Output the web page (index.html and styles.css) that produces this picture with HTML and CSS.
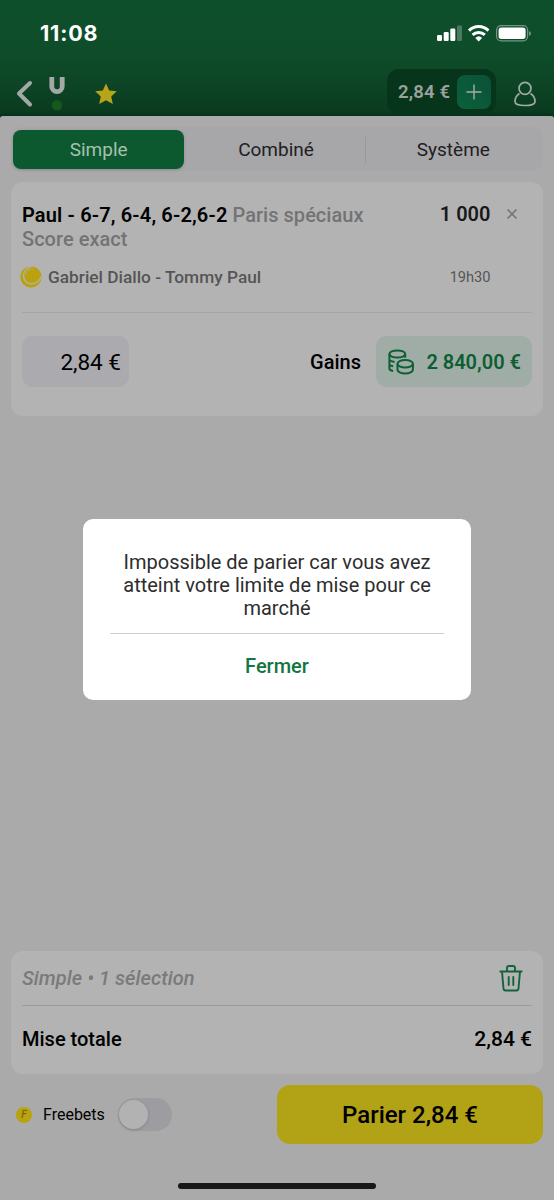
FILE: index.html
```html
<!DOCTYPE html>
<html lang="fr">
<head>
<meta charset="utf-8">
<meta name="viewport" content="width=device-width">
<title>Panier</title>
<link rel="stylesheet" href="styles.css">
</head>
<body>
<div class="app">
  <header class="header">
    <div class="status">
      <span class="clock">11:08</span>
      <svg class="status-icons" width="98" height="20" viewBox="0 0 98 20">
        <g fill="#fff">
          <rect x="1" y="11" width="5" height="6" rx="1.2"/>
          <rect x="7.700" y="8" width="5" height="9" rx="1.2"/>
          <rect x="14.300" y="4.500" width="5" height="12.500" rx="1.2"/>
          <rect x="21" y="1.500" width="5" height="15.500" rx="1.2" opacity=".25"/>
        </g>
        <g fill="none" stroke="#fff" stroke-width="3">
          <path d="M33 6.600a13.600 13.600 0 0 1 19.400 0"/>
          <path d="M36.600 10.900a8.700 8.700 0 0 1 12.200 0"/>
        </g>
        <path d="M39.300 13.900a5 5 0 0 1 6.800 0l-3.400 3.500z" fill="#fff"/>
        <rect x="60.600" y="1.600" width="31" height="15.200" rx="4.500" fill="none" stroke="#76957f" stroke-width="1.200"/>
        <rect x="62.600" y="3.600" width="27" height="11.400" rx="2.700" fill="#fff"/>
        <path d="M93 7v5q2-.7 2-2.500T93 7" fill="#76957f"/>
      </svg>
    </div>
    <nav class="nav">
      <svg class="back" width="20" height="30" viewBox="0 0 20 30"><path d="M16 4 5 14.500 16 25.500" fill="none" stroke="#a5a9a6" stroke-width="4" stroke-linecap="round" stroke-linejoin="round"/></svg>
      <svg class="brand" width="20" height="36" viewBox="0 0 20 36"><path d="M4.800 2v9.500a5.200 5.200 0 0 0 10.400 0V2" fill="none" stroke="#a5a9a6" stroke-width="4.800"/><circle cx="10" cy="30.300" r="5.200" fill="#17581d"/></svg>
      <svg class="star" width="24" height="24" viewBox="0 0 24 24"><path d="m12 1.500 3.200 7 7.600.8-5.600 5.300 1.600 7.400L12 18.300 5.200 22l1.600-7.400L1.200 9.300l7.600-.8z" fill="#b8a417"/></svg>
      <div class="balance"><span class="amount">2,84 €</span><span class="add"><svg width="16" height="16" viewBox="0 0 16 16"><path d="M8 .5v15M.5 8h15" stroke="#a5ada7" stroke-width="1.400"/></svg></span></div>
      <svg class="user" width="24" height="28" viewBox="0 0 24 28"><g fill="none" stroke="#a0aaa4" stroke-width="1.700"><circle cx="12" cy="8.300" r="6"/><path d="M6.500 13.500C3.200 15.500 2 18.500 2 21.500c0 3 4.600 4 10 4s10-1 10-4c0-3-1.200-6-4.500-8"/></g></svg>
    </nav>
  </header>

  <main class="sheet">
    <div class="tabs">
      <span class="tab tab-active">Simple</span>
      <span class="tab">Combiné</span>
      <span class="tab tab-last">Système</span>
    </div>

    <section class="card bet">
      <div class="bet-top">
        <p class="pick"><b>Paul - 6-7, 6-4, 6-2,6-2</b> Paris spéciaux<br>Score exact</p>
        <span class="odds">1 000</span>
        <svg class="close" width="12" height="12" viewBox="0 0 12 12"><path d="m1.500 1.500 9 9m0-9-9 9" stroke="#717173" stroke-width="1.500"/></svg>
      </div>
      <div class="match">
        <svg class="ball" width="22" height="22" viewBox="0 0 22 22"><circle cx="11" cy="11" r="10.600" fill="#b9a10f"/><path d="M11.500 .5C6.500 2 3.200 6 3.500 10.500c.4 5 4.500 7.500 8.500 7.300 4.200-.2 7.500-3 9.300-7.300" fill="none" stroke="#b3b3a6" stroke-width="1.400"/><path d="M13.500 3.500C9 2.800 5.500 6 5.500 10" fill="none" stroke="#b3b08a" stroke-width=".7"/></svg>
        <span class="players">Gabriel Diallo - Tommy Paul</span>
        <span class="time">19h30</span>
      </div>
      <div class="stake-row">
        <span class="stake">2,84 €</span>
        <span class="gain-label">Gains</span>
        <span class="gain">
          <svg width="26" height="26" viewBox="0 0 26 26"><g fill="none" stroke="#0e5e34" stroke-width="2"><ellipse cx="9.300" cy="5" rx="7.900" ry="3.600"/><path d="M1.400 5v14.500c0 1.200 1.200 2 3.700 2.400M1.400 10.200c0 1.400 1.800 2.200 5.200 2.700M1.400 15c0 1.400 1.200 1.900 3.700 2.300M17.200 5v3.800"/><ellipse cx="17.200" cy="14.800" rx="7.700" ry="3.700"/><path d="M9.500 14.800v6c0 2 3.400 3.700 7.700 3.700s7.700-1.700 7.700-3.700v-6"/></g></svg>
          <span class="gain-value">2 840,00 €</span>
        </span>
      </div>
    </section>

    <footer class="bottom">
      <section class="card summary">
        <div class="summary-head">
          <span class="selection">Simple • 1 sélection</span>
          <svg class="trash" width="24" height="28" viewBox="0 0 24 28"><g fill="none" stroke="#14623b" stroke-width="1.900" stroke-linecap="round" stroke-linejoin="round"><path d="M1.300 7.500h21.400M3 7.500l1.500 17q.2 2 2 2h11q1.800 0 2-2l1.500-17M8 7.500V4q0-2 2-2h4q2 0 2 2v3.500M9.700 13v8M14.300 13v8"/></g></svg>
        </div>
        <div class="total"><span class="total-label">Mise totale</span><span class="total-value">2,84 €</span></div>
      </section>
      <div class="actions">
        <span class="coin">F</span>
        <span class="freebets">Freebets</span>
        <span class="switch"><span class="knob"></span></span>
        <button class="submit"><span>Parier 2,84 €</span></button>
      </div>
      <div class="home-bar"></div>
    </footer>
  </main>

  <div class="overlay">
    <div class="dialog">
      <p class="message">Impossible de parier car vous avez<br>atteint votre limite de mise pour ce<br>marché</p>
      <div class="dismiss">Fermer</div>
    </div>
  </div>
</div>
</body>
</html>
```
FILE: styles.css
```css
* { box-sizing: border-box; }
body { margin: 0; }
p { margin: 0; }
svg { display: block; flex: none; }
span { white-space: nowrap; }

.app {
  position: relative;
  width: 554px;
  height: 1200px;
  display: flex;
  flex-direction: column;
  overflow: hidden;
  background: #0b3c20;
  font-family: Roboto, "Liberation Sans", sans-serif;
  color: #000;
}

.header {
  height: 116px;
  flex: none;
  background: linear-gradient(#0e4f2b 0, #0e4d2a 52px, #0d4626 80px, #0a3b20 112px, #07301a 116px);
}
.status {
  height: 66px;
  padding: 0 20px 0 40px;
  display: flex;
  align-items: center;
  justify-content: space-between;
}
.clock {
  font: 700 21.5px/26px Inter, sans-serif;
  letter-spacing: .85px;
  color: #fff;
}
.status-icons { margin-top: 1px; }
.nav {
  height: 50px;
  padding: 0 18px 0 14px;
  display: flex;
  align-items: center;
}
.back { margin-top: 5px; }
.brand { margin: 4px 0 0 13px; }
.star { margin: 6px 0 0 27px; }
.balance {
  width: 109px;
  height: 45px;
  margin: 1px 17px 0 auto;
  padding: 0 5px 0 11px;
  display: flex;
  align-items: center;
  justify-content: space-between;
  border-radius: 12px;
  background: #07351c;
  color: #9ba29d;
}
.amount { font-size: 18.5px; font-weight: 600; letter-spacing: .15px; }
.add {
  width: 34px;
  height: 34px;
  display: flex;
  align-items: center;
  justify-content: center;
  border-radius: 8px;
  background: linear-gradient(45deg, #0b613a, #0b5139);
}
.user { margin: 5px -1px 0 0; }

.sheet {
  flex: 1;
  display: flex;
  flex-direction: column;
  padding: 11px 11px 0;
  border-radius: 3px 3px 0 0;
  background: #aaaaaa;
}
.tabs {
  height: 44px;
  padding: 3px 2px 2px;
  display: flex;
  flex: none;
  border-radius: 10px;
  background: #a7a7aa;
}
.tab {
  width: 172px;
  display: flex;
  align-items: center;
  justify-content: center;
  font-size: 19px;
  color: #202022;
}
.tab:nth-child(2) { width: 181px; padding-left: 3px; }
.tab-active {
  border-radius: 8px;
  background: #0d592f;
  color: #a6c0b0;
  box-shadow: 0 1px 3px #8c8c8e;
}
.tab-last {
  height: 26px;
  align-self: center;
  width: 177px;
  border-left: 1px solid #98989b;
}

.card { border-radius: 12px; background: #b3b3b3; }
.bet {
  height: 234px;
  margin-top: 11px;
  padding: 22px 11px 0;
  flex: none;
}
.bet-top { height: 59px; display: flex; align-items: flex-start; }
.pick {
  flex: 1;
  font-size: 20px;
  line-height: 23.5px;
  font-weight: 500;
  letter-spacing: .03px;
  color: #737375;
}
.pick b { font-weight: 600; letter-spacing: .15px; color: #000; }
.odds { font-size: 20px; line-height: 20px; font-weight: 600; letter-spacing: .03px; color: #19191a; }
.close { margin: 4px 14px 0 15.500px; }
.match {
  height: 50px;
  padding-bottom: 21px;
  display: flex;
  align-items: center;
  border-bottom: 1px solid #a5a5a5;
}
.ball { margin-left: -2px; }
.players { margin-left: 6px; font-size: 17.3px; font-weight: 500; color: #555556; }
.time { margin: 0 41.500px 0 auto; font-size: 14.6px; color: #555556; }
.stake-row { display: flex; align-items: center; margin-top: 23px; height: 51px; }
.stake {
  width: 107px;
  height: 51px;
  padding: 1px 8px 0 0;
  display: flex;
  align-items: center;
  justify-content: flex-end;
  border-radius: 11px;
  background: #aaaaaf;
  font-size: 22.5px;
}
.gain-label { margin-left: auto; font-size: 20px; font-weight: 500; }
.gain {
  width: 156px;
  height: 51px;
  margin-left: 15px;
  padding: 0 11px 0 12px;
  display: flex;
  align-items: center;
  justify-content: space-between;
  border-radius: 11px;
  background: #9fada6;
  color: #0e5e34;
}
.gain-value { font-size: 20px; font-weight: 600; }

.bottom { margin-top: auto; height: 250px; }
.summary { height: 123px; padding: 0 11px; margin-top: 1px; }
.summary-head {
  height: 54.5px;
  padding-right: 9px;
  display: flex;
  align-items: center;
  justify-content: space-between;
  border-bottom: 1px solid #9c9c9d;
}
.selection { font-size: 20px; font-weight: 500; font-style: italic; letter-spacing: .06px; color: #7a7a7b; }
.total {
  height: 67px;
  display: flex;
  align-items: center;
  justify-content: space-between;
  font-size: 20px;
  font-weight: 500;
}
.total-value { font-size: 21px; }
.actions { display: flex; align-items: center; height: 59px; margin-top: 11px; padding-left: 5px; }
.coin {
  width: 16px;
  height: 16px;
  border-radius: 50%;
  background: #b8a40f;
  color: #7a650b;
  font: italic 500 10px/16px Roboto, sans-serif;
  text-align: center;
}
.freebets { width: 62px; margin-left: 11px; font-size: 16px; }
.switch {
  width: 54px;
  height: 33px;
  padding: 2px 1px;
  margin-left: 13px;
  border-radius: 17px;
  background: #9d9da1;
}
.knob {
  display: block;
  width: 29px;
  height: 29px;
  border-radius: 50%;
  background: #b2b2b2;
  box-shadow: 0 1px 3px #858588;
}
.submit {
  width: 266px;
  height: 59px;
  margin-left: auto;
  padding: 0;
  border: 0;
  border-radius: 13px;
  background: #b2a215;
  font: 500 24px Roboto, sans-serif;
  color: #000;
}
.home-bar { width: 198px; height: 6px; margin: 39px auto 0; border-radius: 3px; background: #151815; }

.overlay {
  position: absolute;
  inset: 0;
  display: flex;
  align-items: center;
  justify-content: center;
  padding-top: 18px;
}
.dialog {
  width: 388px;
  height: 181px;
  padding: 32px 27px 0;
  border-radius: 10px;
  background: #fff;
  text-align: center;
}
.message {
  height: 83px;
  font-size: 20px;
  line-height: 23.3px;
  color: #2d2d2e;
  border-bottom: 1px solid #cfcfcf;
  white-space: nowrap;
}
.dismiss { height: 65px; font-size: 20px; line-height: 65px; font-weight: 500; color: #127640; }
```
